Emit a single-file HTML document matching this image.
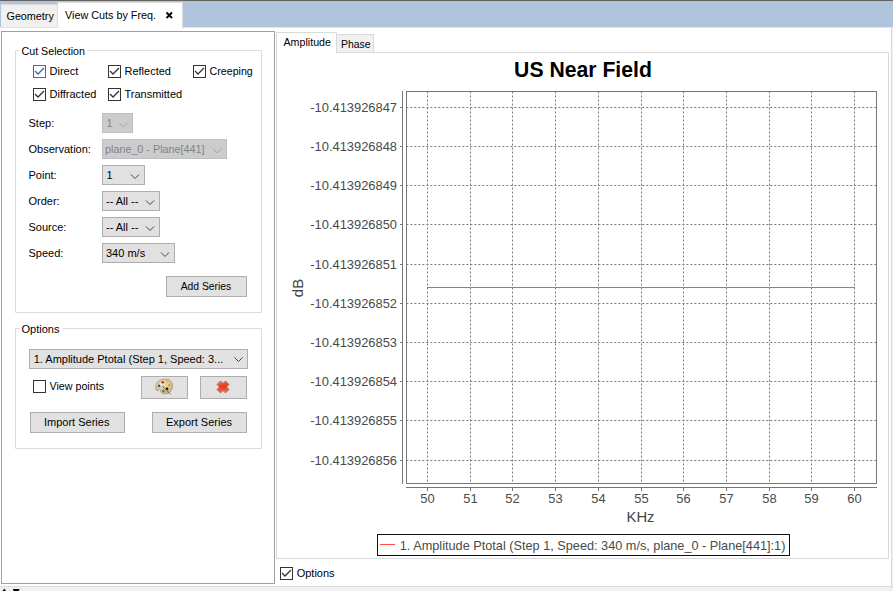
<!DOCTYPE html>
<html><head><meta charset="utf-8">
<style>
html,body{margin:0;padding:0;width:893px;height:591px;overflow:hidden;background:#fff}
svg{display:block}
text{font-family:"Liberation Sans",sans-serif}
.ui{font-size:11px;fill:#000}
.ch{font-size:12.9px;fill:#4a4a4a}
</style></head><body>
<svg width="893" height="591" viewBox="0 0 893 591">
<!-- window background -->
<rect x="0" y="0" width="893" height="591" fill="#ffffff"/>
<!-- top dark line and blue tab bar -->
<rect x="0" y="0" width="893" height="1" fill="#63625f"/>
<rect x="0" y="1" width="893" height="26" fill="#b0c4de"/>
<rect x="0" y="27" width="893" height="1" fill="#e4e4e2"/>
<!-- Geometry tab -->
<rect x="1" y="4" width="57" height="24" fill="#f0f0f0"/>
<rect x="1" y="4" width="57" height="1" fill="#dadada"/>
<rect x="1" y="27" width="57" height="1" fill="#e2e2e2"/>
<rect x="57" y="4" width="1" height="24" fill="#dcdcdc"/>
<text class="ui" x="6.5" y="20" textLength="47.3" lengthAdjust="spacingAndGlyphs">Geometry</text>
<!-- selected tab -->
<rect x="58" y="2" width="124" height="27" fill="#ffffff"/>
<rect x="57" y="2" width="126" height="1" fill="#dcdcdc"/>
<rect x="182" y="2" width="1" height="27" fill="#d9d9d9"/>
<text class="ui" x="65" y="19" textLength="91" lengthAdjust="spacingAndGlyphs">View Cuts by Freq.</text>
<path d="M166.5 12.5 L172 18 M172 12.5 L166.5 18" stroke="#000" stroke-width="1.8"/>

<!-- left panel -->
<rect x="1.5" y="31.5" width="273" height="552" fill="#fff" stroke="#a0a0a0"/>

<!-- Cut Selection group -->
<path d="M19.5 50.5 H15.5 V312.5 H261.5 V50.5 H87" fill="none" stroke="#dcdcdc"/>
<text class="ui" x="21.5" y="55" textLength="63.5" lengthAdjust="spacingAndGlyphs">Cut Selection</text>

<!-- checkboxes -->
<g fill="none" stroke-width="1">
<rect x="33.5" y="65.5" width="12" height="12" stroke="#2f6fb7" fill="#fff"/>
<path d="M35 71 L38 74 L44 68" stroke="#2f6fb7" stroke-width="1.3"/>
<rect x="108.5" y="65.5" width="12" height="12" stroke="#333"/>
<path d="M110 71 L113 74 L119 68" stroke="#333" stroke-width="1.3"/>
<rect x="193.5" y="65.5" width="12" height="12" stroke="#333"/>
<path d="M195 71 L198 74 L204 68" stroke="#333" stroke-width="1.3"/>
<rect x="33.5" y="88.5" width="12" height="12" stroke="#333"/>
<path d="M35 94 L38 97 L44 91" stroke="#333" stroke-width="1.3"/>
<rect x="108.5" y="88.5" width="12" height="12" stroke="#333"/>
<path d="M110 94 L113 97 L119 91" stroke="#333" stroke-width="1.3"/>
</g>
<text class="ui" x="49.5" y="75">Direct</text>
<text class="ui" x="124.5" y="75">Reflected</text>
<text class="ui" x="209.5" y="75" textLength="43.3" lengthAdjust="spacingAndGlyphs">Creeping</text>
<text class="ui" x="49.5" y="98">Diffracted</text>
<text class="ui" x="124.5" y="98">Transmitted</text>

<!-- form rows -->
<text class="ui" x="28.5" y="127">Step:</text>
<text class="ui" x="28.5" y="153">Observation:</text>
<text class="ui" x="28.5" y="179">Point:</text>
<text class="ui" x="28.5" y="205">Order:</text>
<text class="ui" x="28.5" y="231">Source:</text>
<text class="ui" x="28.5" y="257">Speed:</text>

<!-- disabled combos -->
<rect x="102.5" y="113.5" width="30" height="19" fill="#cccccc" stroke="#bfbfbf"/>
<text class="ui" x="106.5" y="127" fill="#838383" style="fill:#838383">1</text>
<path d="M119 122.8 L123.2 127 L127.4 122.8" fill="none" stroke="#a8a8a8"/>
<rect x="102.5" y="139.5" width="124" height="19" fill="#cccccc" stroke="#bfbfbf"/>
<text class="ui" x="105" y="153" style="fill:#838383" textLength="99.5" lengthAdjust="spacingAndGlyphs">plane_0 - Plane[441]</text>
<path d="M213 148.8 L217.2 153 L221.4 148.8" fill="none" stroke="#a8a8a8"/>

<!-- enabled combos -->
<g fill="#e1e1e1" stroke="#adadad">
<rect x="102.5" y="165.5" width="42" height="19"/>
<rect x="102.5" y="191.5" width="57" height="19"/>
<rect x="102.5" y="217.5" width="57" height="19"/>
<rect x="102.5" y="243.5" width="72" height="19"/>
</g>
<g fill="none" stroke="#444" stroke-width="1">
<path d="M131 174.5 L135 178.5 L139 174.5"/>
<path d="M146 200.5 L150 204.5 L154 200.5"/>
<path d="M146 226.5 L150 230.5 L154 226.5"/>
<path d="M161 252.5 L165 256.5 L169 252.5"/>
</g>
<text class="ui" x="106.5" y="179">1</text>
<text class="ui" x="106" y="205">-- All --</text>
<text class="ui" x="106" y="231">-- All --</text>
<text class="ui" x="106" y="257">340 m/s</text>

<!-- Add Series button -->
<rect x="166.5" y="276.5" width="80" height="20" fill="#e1e1e1" stroke="#adadad"/>
<text class="ui" x="180.7" y="290" textLength="50.6" lengthAdjust="spacingAndGlyphs">Add Series</text>

<!-- Options group -->
<path d="M19.5 328.5 H15.5 V448.5 H261.5 V328.5 H63" fill="none" stroke="#dcdcdc"/>
<text class="ui" x="21.5" y="333">Options</text>
<rect x="29.5" y="349.5" width="218" height="19" fill="#e1e1e1" stroke="#adadad"/>
<text class="ui" x="33.7" y="363">1. Amplitude Ptotal (Step 1, Speed: 3...</text>
<path d="M234.5 357.5 L238.5 361.5 L242.5 357.5" fill="none" stroke="#444"/>
<rect x="33.5" y="380.5" width="12" height="12" fill="#fff" stroke="#333"/>
<text class="ui" x="49.5" y="390" textLength="54.5" lengthAdjust="spacingAndGlyphs">View points</text>
<rect x="141.5" y="376.5" width="46" height="22" fill="#e1e1e1" stroke="#adadad"/>
<rect x="200.5" y="376.5" width="46" height="22" fill="#e1e1e1" stroke="#adadad"/>
<!-- palette icon -->
<defs>
<radialGradient id="pg" cx="0.45" cy="0.35" r="0.7">
<stop offset="0" stop-color="#efdfb8"/>
<stop offset="0.6" stop-color="#dcc390"/>
<stop offset="1" stop-color="#c2a46c"/>
</radialGradient>
</defs>
<g>
<path d="M157.5 382 C159.5 379.5 163.5 378.8 167 379.3 C170.5 379.8 172.6 382.5 172.5 386 C172.4 389.5 170.5 392.6 167 393.6 C164.5 394.2 161.8 393.8 161 392.3 C160.4 391 160.8 389.8 159.8 389.5 C158.8 389.3 158.2 391.2 157 390.8 C155.6 390.3 155.5 387.5 155.9 385.5 C156.2 384.2 156.7 383 157.5 382 Z" fill="url(#pg)" stroke="#ad9060" stroke-width="0.7"/>
<circle cx="162.8" cy="382.2" r="1.3" fill="#c82a2a"/>
<circle cx="167.4" cy="381.6" r="1.1" fill="#b4b4b4"/>
<circle cx="169.2" cy="384.9" r="1.2" fill="#cfae10"/>
<circle cx="159.2" cy="385.8" r="1.3" fill="#1f3fc0"/>
<circle cx="167" cy="388.8" r="1.3" fill="#151515"/>
<circle cx="163.4" cy="391" r="1.3" fill="#1e9a2a"/>
<path d="M160 383.6 L162.3 385.9" stroke="#f4f4f4" stroke-width="1.8"/>
<path d="M162.3 386 L170.6 394.4" stroke="#6e5f70" stroke-width="1"/>
</g>
<!-- delete icon -->
<defs>
<linearGradient id="xg" x1="0" y1="0" x2="0" y2="1">
<stop offset="0" stop-color="#e46a62"/>
<stop offset="0.45" stop-color="#e2391c"/>
<stop offset="1" stop-color="#f27a4c"/>
</linearGradient>
<linearGradient id="xh" x1="0" y1="0" x2="1" y2="1">
<stop offset="0" stop-color="#ffffff" stop-opacity="0.35"/>
<stop offset="0.5" stop-color="#ffffff" stop-opacity="0.05"/>
<stop offset="1" stop-color="#ffffff" stop-opacity="0"/>
</linearGradient>
</defs>
<path d="M217 384.5 L220.5 381 L223 383.5 L225.5 381 L229 384.5 L226.5 387 L229 389.5 L225.5 393 L223 390.5 L220.5 393 L217 389.5 L219.5 387 Z" fill="url(#xg)" stroke="#b9503e" stroke-width="0.7" stroke-linejoin="round"/>
<path d="M217.5 384.5 L220.5 381.5 L223 384 L222 388 L219.5 387 Z" fill="url(#xh)"/>
<rect x="30.5" y="412.5" width="94" height="20" fill="#e1e1e1" stroke="#adadad"/>
<text class="ui" x="44" y="426">Import Series</text>
<rect x="152.5" y="412.5" width="94" height="20" fill="#e1e1e1" stroke="#adadad"/>
<text class="ui" x="166" y="426">Export Series</text>

<!-- right: chart tabs -->
<rect x="276.5" y="52.5" width="612" height="506" fill="#fff" stroke="#d9d9d9"/>
<rect x="276.5" y="32.5" width="60" height="20" fill="#fff" stroke="#d9d9d9"/>
<rect x="277" y="52" width="59" height="1" fill="#fff"/>
<rect x="336.5" y="34.5" width="37" height="18" fill="#f0f0f0" stroke="#d9d9d9"/>
<text class="ui" x="283.5" y="46" textLength="47.5" lengthAdjust="spacingAndGlyphs">Amplitude</text>
<text class="ui" x="341" y="48" textLength="29.5" lengthAdjust="spacingAndGlyphs">Phase</text>

<!-- chart -->
<text x="583" y="77" text-anchor="middle" style="font-size:21.2px;font-weight:bold;fill:#000">US Near Field</text>
<!-- grid -->
<g stroke="#7a7a7a" stroke-width="1" stroke-dasharray="2 2" fill="none">
<path stroke-dashoffset="0.6" d="M407 107.5 H876 M407 146.5 H876 M407 185.5 H876 M407 224.5 H876 M407 264.5 H876 M407 303.5 H876 M407 342.5 H876 M407 381.5 H876 M407 420.5 H876 M407 460.5 H876"/>
<path stroke-dashoffset="0.5" d="M427.5 92 V483 M470.5 92 V483 M512.5 92 V483 M555.5 92 V483 M598.5 92 V483 M641.5 92 V483 M683.5 92 V483 M726.5 92 V483 M769.5 92 V483 M811.5 92 V483 M854.5 92 V483"/>
</g>
<!-- series -->
<path d="M427 287.5 H855" stroke="#ff5050" stroke-width="1"/>
<!-- plot border -->
<rect x="406.5" y="91.5" width="470" height="392" fill="none" stroke="#777"/>
<!-- y axis -->
<path d="M402.5 91 V484" stroke="#777"/>
<path stroke="#777" d="M400 107.5 H402 M400 146.5 H402 M400 185.5 H402 M400 224.5 H402 M400 264.5 H402 M400 303.5 H402 M400 342.5 H402 M400 381.5 H402 M400 420.5 H402 M400 460.5 H402"/>
<!-- x axis -->
<path d="M406 487.5 H877" stroke="#777"/>
<path stroke="#777" d="M427.5 488 V491 M470.5 488 V491 M512.5 488 V491 M555.5 488 V491 M598.5 488 V491 M641.5 488 V491 M683.5 488 V491 M726.5 488 V491 M769.5 488 V491 M811.5 488 V491 M854.5 488 V491"/>
<g text-anchor="end">
<text class="ch" x="397" y="112">-10.413926847</text>
<text class="ch" x="397" y="151">-10.413926848</text>
<text class="ch" x="397" y="190">-10.413926849</text>
<text class="ch" x="397" y="229">-10.413926850</text>
<text class="ch" x="397" y="269">-10.413926851</text>
<text class="ch" x="397" y="308">-10.413926852</text>
<text class="ch" x="397" y="347">-10.413926853</text>
<text class="ch" x="397" y="386">-10.413926854</text>
<text class="ch" x="397" y="425">-10.413926855</text>
<text class="ch" x="397" y="465">-10.413926856</text>
</g>
<g text-anchor="middle">
<text class="ch" x="427.5" y="503">50</text>
<text class="ch" x="470.5" y="503">51</text>
<text class="ch" x="512.5" y="503">52</text>
<text class="ch" x="555.5" y="503">53</text>
<text class="ch" x="598.5" y="503">54</text>
<text class="ch" x="641.5" y="503">55</text>
<text class="ch" x="683.5" y="503">56</text>
<text class="ch" x="726.5" y="503">57</text>
<text class="ch" x="769.5" y="503">58</text>
<text class="ch" x="811.5" y="503">59</text>
<text class="ch" x="854.5" y="503">60</text>
</g>
<text x="640.5" y="522" text-anchor="middle" style="font-size:14.8px;fill:#444">KHz</text>
<text x="0" y="0" text-anchor="middle" transform="translate(303,288) rotate(-90)" style="font-size:15px;fill:#444">dB</text>
<!-- legend -->
<rect x="377.5" y="534.5" width="412" height="21" fill="#fff" stroke="#111"/>
<path d="M380 544.5 H395" stroke="#ff5050"/>
<text class="ch" x="399.8" y="550" textLength="385.6" lengthAdjust="spacingAndGlyphs">1. Amplitude Ptotal (Step 1, Speed: 340 m/s, plane_0 - Plane[441]:1)</text>

<!-- bottom options checkbox -->
<rect x="280.5" y="567.5" width="12" height="12" fill="#fff" stroke="#333"/>
<path d="M282 573 L285 576 L291 570" fill="none" stroke="#333" stroke-width="1.3"/>
<text class="ui" x="296.7" y="577">Options</text>

<!-- window right border -->
<rect x="891" y="27" width="1" height="559" fill="#dadada"/>
<rect x="892" y="27" width="1" height="564" fill="#efefef"/>
<!-- bottom status strip -->
<rect x="0" y="586" width="893" height="1" fill="#dcdcdc"/>
<rect x="0" y="587" width="893" height="4" fill="#f0f0f0"/>
<path d="M2.3 591.5 L4.3 588.6 L6.3 591.5 Z" fill="#000"/>
<path d="M13 589 H19.4 V590 L18.4 591 H14 L13 590 Z" fill="#000"/>
</svg>
</body></html>
